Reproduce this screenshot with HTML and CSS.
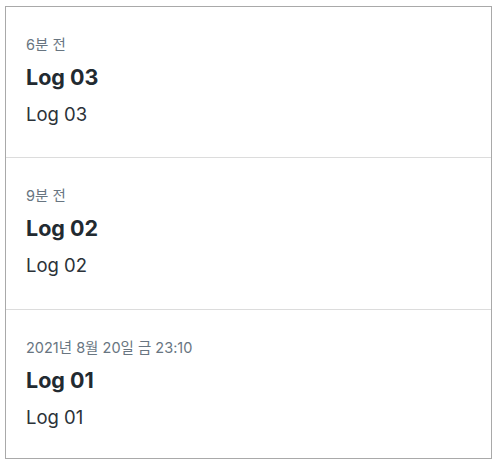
FILE: index.html
```html
<!DOCTYPE html>
<html lang="ko">
<head>
<meta charset="utf-8">
<link rel="stylesheet" href="styles.css">
</head>
<body>
<ul class="log-list">
  <li class="log-item">
    <div class="log-time">6분 전</div>
    <div class="log-title">Log 03</div>
    <div class="log-body">Log 03</div>
  </li>
  <li class="log-item">
    <div class="log-time">9분 전</div>
    <div class="log-title">Log 02</div>
    <div class="log-body">Log 02</div>
  </li>
  <li class="log-item">
    <div class="log-time">2021년 8월 20일 금 23:10</div>
    <div class="log-title">Log 01</div>
    <div class="log-body">Log 01</div>
  </li>
</ul>
</body>
</html>
```
FILE: styles.css
```css
html, body {
  margin: 0;
  padding: 0;
  background: #ffffff;
}
body {
  padding: 6px 11px 0 5px;
  font-family: Inter, "Noto Sans CJK KR", sans-serif;
}
.log-list {
  list-style: none;
  margin: 0;
  padding: 0;
  border: 1px solid #a9a9a9;
}
.log-item {
  padding: 28px 20px 30px;
  border-bottom: 1px solid #dcdcdc;
}
.log-item:nth-child(2) {
  padding-bottom: 31px;
}
.log-item:last-child {
  border-bottom: none;
  padding-bottom: 28px;
}
.log-time {
  font-size: 14.5px;
  line-height: 20px;
  color: #687581;
}
.log-title {
  margin-top: 8px;
  font-size: 21.5px;
  line-height: 28px;
  font-weight: 700;
  color: #222a31;
}
.log-body {
  margin-top: 10px;
  font-size: 18.5px;
  line-height: 26px;
  color: #2b3238;
}
```
